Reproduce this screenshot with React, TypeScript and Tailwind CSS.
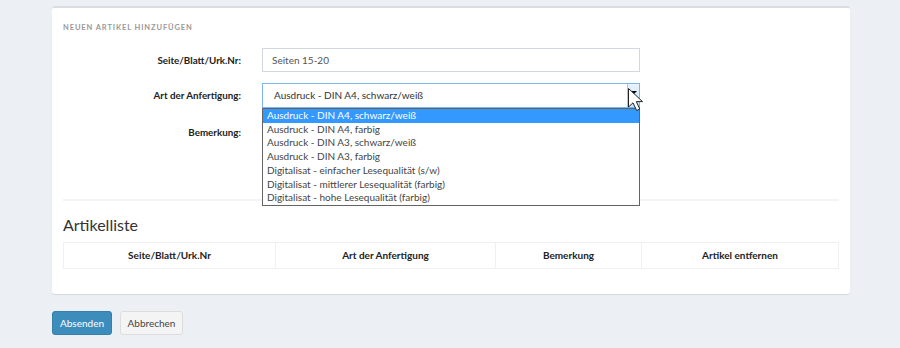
import React from "react";

const options = [
  "Ausdruck - DIN A4, schwarz/weiß",
  "Ausdruck - DIN A4, farbig",
  "Ausdruck - DIN A3, schwarz/weiß",
  "Ausdruck - DIN A3, farbig",
  "Digitalisat - einfacher Lesequalität (s/w)",
  "Digitalisat - mittlerer Lesequalität (farbig)",
  "Digitalisat - hohe Lesequalität (farbig)",
];

const columns = [
  { label: "Seite/Blatt/Urk.Nr", w: "w-[211px]" },
  { label: "Art der Anfertigung", w: "w-[220px]" },
  { label: "Bemerkung", w: "w-[146px]" },
  { label: "Artikel entfernen", w: "flex-1" },
];

function Cursor() {
  return (
    <svg
      className="absolute left-[564px] top-[4px] z-20"
      width="22"
      height="28"
      viewBox="0 0 22 28"
    >
      <path
        d="M1.5 1.5 L1.5 20 L6 15.8 L9.6 23.5 L12.8 22 L9.3 14.6 L15.5 14.6 Z"
        fill="#fff"
        stroke="#222"
        strokeWidth="1"
        strokeLinejoin="round"
      />
    </svg>
  );
}

export default function App() {
  return (
    <div className="min-h-[348px] bg-[#ecf0f5] pl-[52px] pr-[50px] pt-[6px] font-['Lato',sans-serif] text-[#333]">
      {/* Box */}
      <div className="rounded-[3px] border-t-[2px] border-[#d9dde3] bg-white px-[11px] pb-[25px] shadow-[0_1px_1px_rgba(0,0,0,0.1)]">
        <h3 className="pt-[15px] text-[7.5px] font-bold uppercase leading-[10px] tracking-[0.9px] text-[#999]">
          Neuen Artikel hinzufügen
        </h3>

        <div className="mt-[15px] flex items-center">
          <label className="w-[178px] text-right text-[9.8px] font-bold text-[#222]">Seite/Blatt/Urk.Nr:</label>
          <input
            readOnly
            value="Seiten 15-20"
            className="ml-[21px] h-[24px] w-[378px] border border-[#d2d6de] px-[9px] text-[10px] text-[#555] outline-none"
          />
        </div>

        <div className="relative mt-[11px] flex items-center">
          <label className="w-[178px] text-right text-[9.8px] font-bold text-[#222]">Art der Anfertigung:</label>
          <div className="relative ml-[21px] flex h-[25px] w-[378px] items-center border border-[#7eb4ea] bg-white">
            <span className="flex-1 pl-[11px] text-[10px] text-[#333]">Ausdruck - DIN A4, schwarz/weiß</span>
            <span className="flex h-full w-[12px] items-start justify-center border-l border-[#a5c8ec] bg-gradient-to-b from-[#e8f3fd] to-[#c4e0f7] pt-[7px]">
              <span className="h-0 w-0 border-x-[3px] border-t-[3px] border-x-transparent border-t-black" />
            </span>
            {/* open list */}
            <ul className="absolute left-[-1px] top-[24px] z-10 w-[378px] border border-[#646464] bg-white text-[10px] leading-[13.7px] text-[#444]">
              {options.map((o, i) => (
                <li
                  key={o}
                  className={i === 0 ? "bg-[#3399ff] pl-[4px] text-white" : "pl-[4px]"}
                >
                  {o}
                </li>
              ))}
            </ul>
          </div>
          <Cursor />
        </div>

        <div className="mt-[11px] flex items-start">
          <label className="w-[178px] pt-[6px] text-right text-[9.8px] font-bold text-[#222]">Bemerkung:</label>
          <textarea className="ml-[21px] h-[70px] w-[378px] resize-none border border-[#d2d6de]" />
        </div>

        <div className="mt-[10px] border-t-[2px] border-[#f4f4f4]" />

        <h2 className="mt-[14px] text-[16px] leading-[20px] text-[#333]">Artikelliste</h2>

        <div className="mt-[7px] flex h-[27px] border border-[#f0f0f0] text-[10px] font-bold text-[#222]">
          {columns.map((c, i) => (
            <div
              key={c.label}
              className={`${c.w} flex items-center justify-center ${i > 0 ? "border-l border-[#f0f0f0]" : ""}`}
            >
              {c.label}
            </div>
          ))}
        </div>
      </div>

      <div className="mt-[17px] flex gap-[8px]">
        <button className="h-[24px] w-[60px] rounded-[3px] border border-[#367fa9] bg-[#3c8dbc] text-[10px] text-white">
          Absenden
        </button>
        <button className="h-[24px] w-[63px] rounded-[3px] border border-[#ddd] bg-[#f4f4f4] text-[10px] text-[#444]">
          Abbrechen
        </button>
      </div>
    </div>
  );
}
